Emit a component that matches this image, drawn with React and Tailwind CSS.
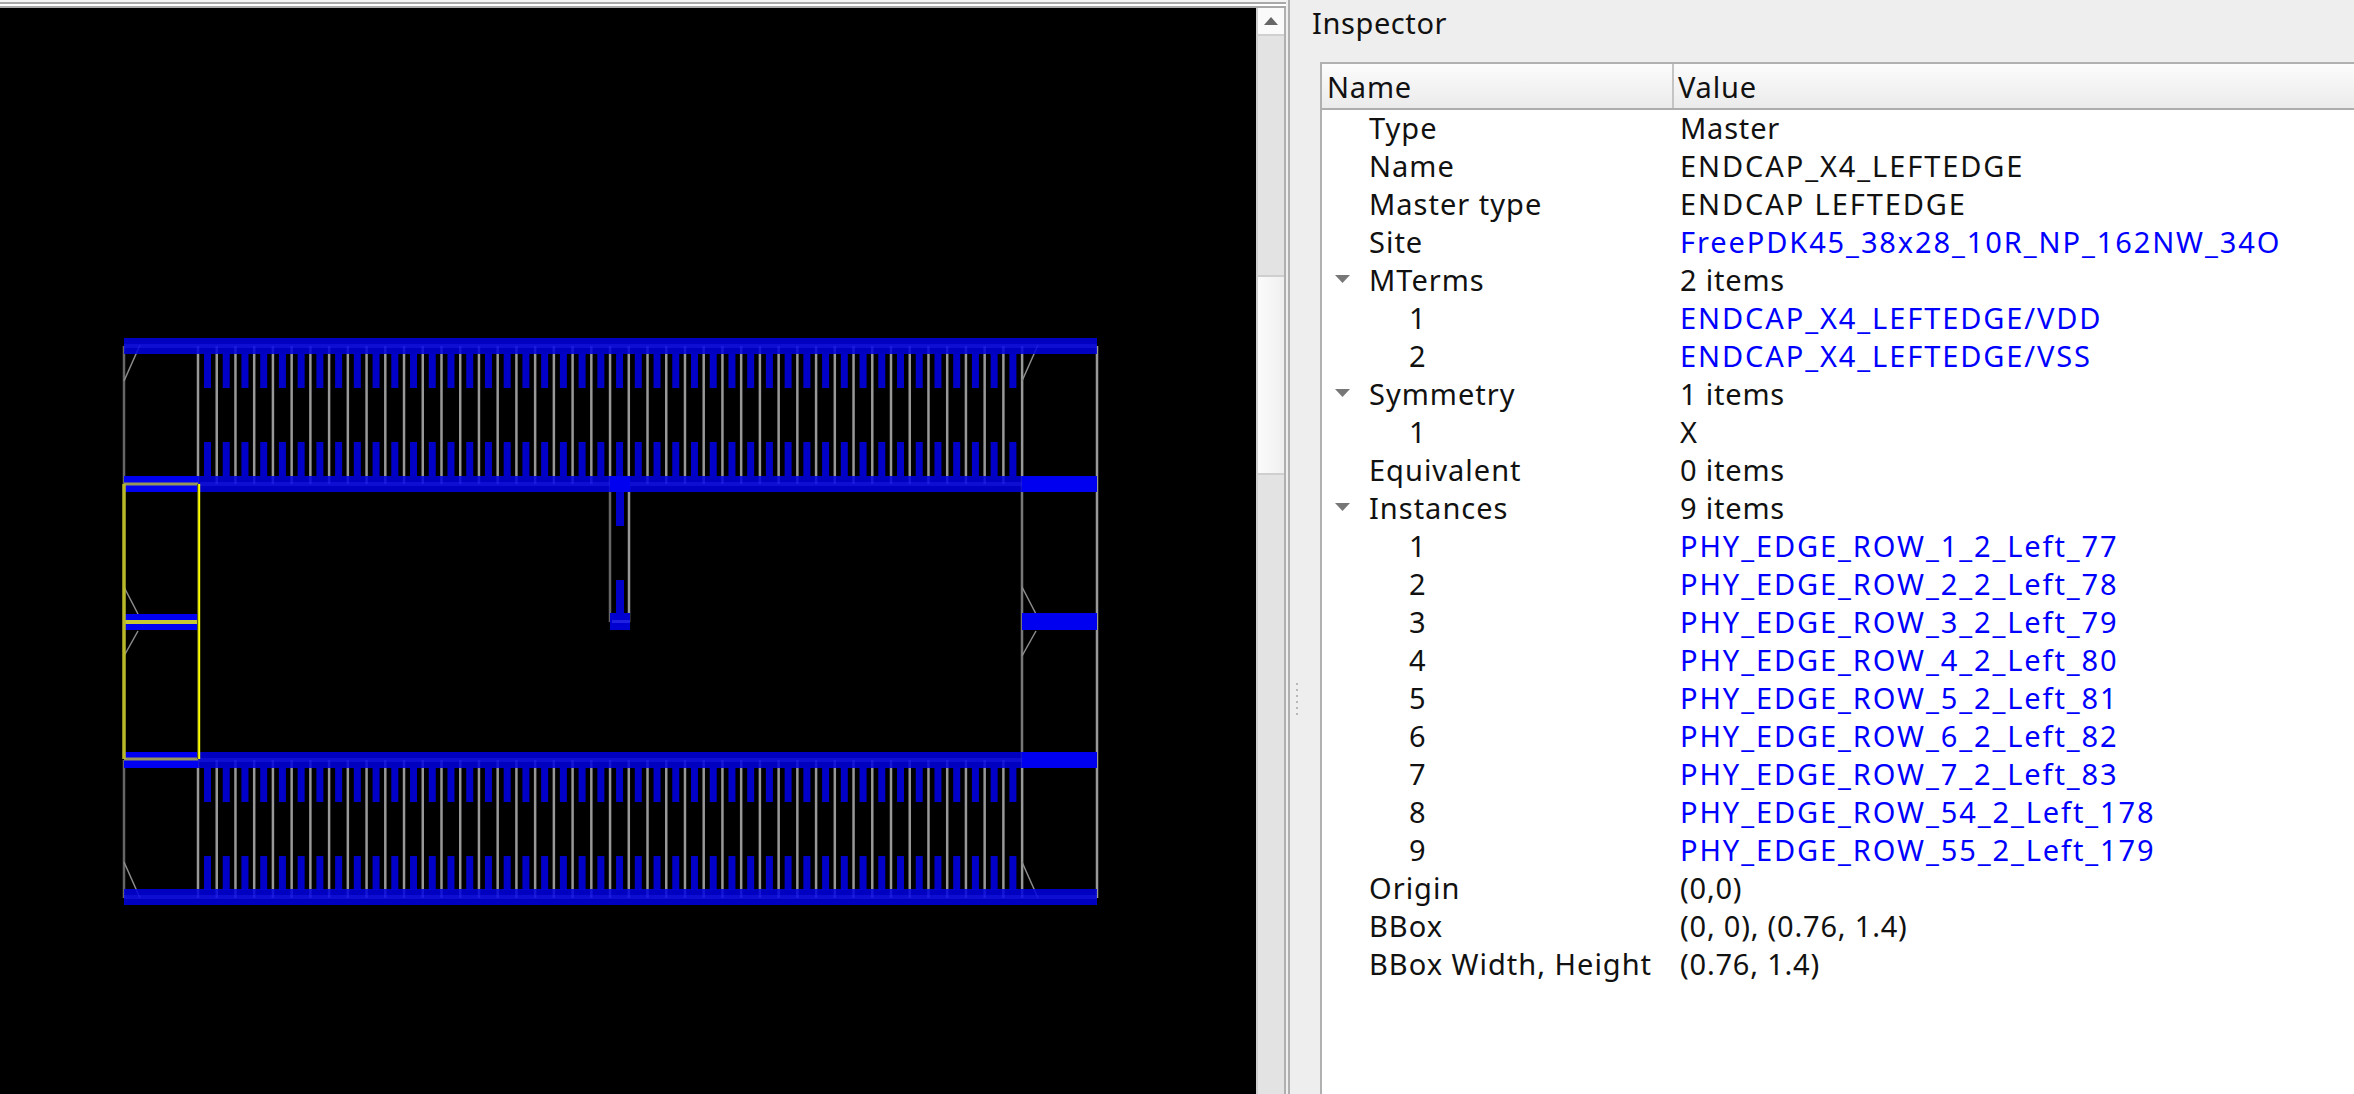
import React from "react";

const cellX = Array.from({ length: 45 }, (_, i) => 198 + i * 18.73);

// rows of the inspector tree
const rows = [
  { name: "Type", value: "Master" },
  { name: "Name", value: "ENDCAP_X4_LEFTEDGE", caps: true },
  { name: "Master type", value: "ENDCAP LEFTEDGE", caps: true },
  { name: "Site", value: "FreePDK45_38x28_10R_NP_162NW_34O", link: true },
  { name: "MTerms", value: "2 items", open: true },
  { name: "1", value: "ENDCAP_X4_LEFTEDGE/VDD", link: true, child: true },
  { name: "2", value: "ENDCAP_X4_LEFTEDGE/VSS", link: true, child: true },
  { name: "Symmetry", value: "1 items", open: true },
  { name: "1", value: "X", child: true },
  { name: "Equivalent", value: "0 items" },
  { name: "Instances", value: "9 items", open: true },
  { name: "1", value: "PHY_EDGE_ROW_1_2_Left_77", link: true, child: true },
  { name: "2", value: "PHY_EDGE_ROW_2_2_Left_78", link: true, child: true },
  { name: "3", value: "PHY_EDGE_ROW_3_2_Left_79", link: true, child: true },
  { name: "4", value: "PHY_EDGE_ROW_4_2_Left_80", link: true, child: true },
  { name: "5", value: "PHY_EDGE_ROW_5_2_Left_81", link: true, child: true },
  { name: "6", value: "PHY_EDGE_ROW_6_2_Left_82", link: true, child: true },
  { name: "7", value: "PHY_EDGE_ROW_7_2_Left_83", link: true, child: true },
  { name: "8", value: "PHY_EDGE_ROW_54_2_Left_178", link: true, child: true },
  { name: "9", value: "PHY_EDGE_ROW_55_2_Left_179", link: true, child: true },
  { name: "Origin", value: "(0,0)" },
  { name: "BBox", value: "(0, 0), (0.76, 1.4)" },
  { name: "BBox Width, Height", value: "(0.76, 1.4)" },
];

function Layout() {
  const rail = (y) => (
    <g key={y}>
      <rect x="124" y={y} width="973" height="16" fill="#0000e0" opacity="0.86" />
      <rect x="124" y={y + 6} width="973" height="4" fill="#3030ff" opacity="0.3" />
    </g>
  );
  return (
    <svg width="1256" height="1086" viewBox="0 8 1256 1086" className="block">
      {/* gray cell outlines */}
      <g stroke="#989898" strokeWidth="2.5" fill="none">
        {cellX.map((x) => (
          <g key={x}>
            <line x1={x} y1="346" x2={x} y2="484" />
            <line x1={x} y1="760" x2={x} y2="898" />
          </g>
        ))}
        <line x1="124" y1="346" x2="124" y2="484" stroke="#666" />
        <line x1="124" y1="760" x2="124" y2="898" stroke="#666" />
        <line x1="1097" y1="346" x2="1097" y2="898" />
        <line x1="1022" y1="484" x2="1022" y2="760" stroke="#777" />
        <line x1="610" y1="484" x2="610" y2="622" stroke="#666" />
        <line x1="629" y1="484" x2="629" y2="622" />
      </g>
      <g stroke="#8c8c8c" strokeWidth="1.5" fill="none">
        <path d="M124 381L140 345M124 862L140 898M1022 381L1038 345M1022 862L1038 898" />
        <path d="M124 587L138 614M138 631L124 656M1022 587L1036 614M1036 631L1022 656" />
      </g>

      {/* metal fingers */}
      <g fill="#0000c8">
        {cellX.slice(0, 44).map((x) => (
          <g key={x}>
            <rect x={x + 6} y="354" width="7" height="34" />
            <rect x={x + 6} y="442" width="7" height="34" />
            <rect x={x + 6} y="768" width="7" height="34" />
            <rect x={x + 6} y="856" width="7" height="34" />
          </g>
        ))}
        <rect x="616" y="492" width="8" height="34" />
        <rect x="616" y="580" width="8" height="34" />
      </g>

      {/* power rails */}
      {[338, 476, 752, 889].map(rail)}
      <g fill="#0000f0">
        <rect x="124" y="476" width="74" height="16" />
        <rect x="124" y="752" width="74" height="16" />
        <rect x="1022" y="476" width="75" height="16" />
        <rect x="1022" y="752" width="75" height="16" />
        <rect x="124" y="614" width="74" height="16" />
        <rect x="1022" y="613" width="75" height="17" />
        <rect x="610" y="476" width="20" height="16" />
      </g>
      <rect x="610" y="613" width="20" height="17" fill="#0000d0" />
      <rect x="612" y="620" width="18" height="3" fill="#2020e0" />

      {/* selected master */}
      <g fill="none">
        <path d="M124 484H198M124 759H198" stroke="#96965a" strokeWidth="3" />
        <path d="M124 622H198" stroke="#c8c830" strokeWidth="4" />
        <path d="M124 484V759" stroke="#b8b828" strokeWidth="3.5" />
        <path d="M198 484V759" stroke="#55551e" strokeWidth="2" />
        <path d="M199.2 484V759" stroke="#ffff00" strokeWidth="2" />
      </g>
    </svg>
  );
}

function Arrow() {
  return (
    <svg width="15" height="8" viewBox="0 0 15 8" className="shrink-0">
      <path d="M0 0H15L7.5 8Z" fill="#777" />
    </svg>
  );
}

function Row({ row }) {
  return (
    <div className="grid grid-cols-[352px_1fr] h-[38px] items-center">
      <div className={`flex items-center ${row.child ? "pl-[87px]" : row.open ? "pl-[13px] gap-[19px]" : "pl-[47px]"}`}>
        {row.open && <Arrow />}
        <span className="tracking-[1px]">{row.name}</span>
      </div>
      <div
        className={`pl-[6px] ${row.link ? "text-[#0000ff] tracking-[1.9px]" : row.caps ? "tracking-[1.9px]" : "tracking-[0.8px]"}`}
      >
        {row.value}
      </div>
    </div>
  );
}

export default function App() {
  return (
    <div className="flex h-screen w-screen overflow-hidden bg-[#eeeeee] text-[29px] leading-none text-[#111] font-['Noto_Sans',sans-serif]">
      <div className="flex flex-col w-[1286px] shrink-0">
        <div className="h-[8px] shrink-0 bg-[#f4f4f4] flex flex-col pt-[2px]">
          <div className="h-[2px] bg-[#a8a8a8]" />
          <div className="h-[2px] bg-white" />
          <div className="h-[2px] bg-[#a8a8a8]" />
        </div>
        <div className="flex flex-1 min-h-0">
          <div className="w-[1256px] bg-black overflow-hidden">
            <Layout />
          </div>
          <div className="flex flex-col flex-1 bg-[#e3e3e3] border-l-2 border-r-2 border-l-[#cfcfcf] border-r-[#b0b0b0]">
            <div className="h-[28px] shrink-0 flex items-center justify-center bg-[#fafafa] border-b-2 border-[#d0d0d0]">
              <svg width="14" height="8" viewBox="0 0 14 8">
                <path d="M7 0L14 8H0Z" fill="#666" />
              </svg>
            </div>
            <div className="h-[239px] shrink-0" />
            <div className="h-[200px] shrink-0 bg-gradient-to-r from-[#fbfbfb] to-[#f0f0f0] border-t-2 border-b-2 border-[#cfcfcf]" />
          </div>
        </div>
      </div>
      <div className="w-[2px] shrink-0 bg-[#efefef]" />
      <div className="flex flex-col flex-1 min-w-0 border-l-2 border-[#b0b0b0]">
        <div className="h-[62px] shrink-0 pl-[22px] pt-[8px] tracking-[0.6px]">Inspector</div>
        <div className="flex flex-1 min-h-0">
          <div className="w-[30px] shrink-0 pl-[6px] pt-[621px] flex flex-col gap-[4px]">
            {[0, 1, 2, 3, 4, 5].map((i) => (
              <div key={i} className="w-[2px] h-[2px] bg-[#b8b8b8]" />
            ))}
          </div>
          <div className="flex-1 min-w-0 bg-white border-l-2 border-t-2 border-[#b0b0b0]">
            <div className="grid grid-cols-[352px_1fr] h-[46px] items-center bg-gradient-to-b from-[#fcfcfc] to-[#ebebeb] border-b-2 border-[#adadad] tracking-[0.8px]">
              <div className="h-full flex items-center pl-[5px] border-r-2 border-[#c4c4c4]">Name</div>
              <div className="pl-[4px]">Value</div>
            </div>
            <div className="-mt-[2px]">
              {rows.map((row, i) => (
                <Row key={i} row={row} />
              ))}
            </div>
          </div>
        </div>
      </div>
    </div>
  );
}
